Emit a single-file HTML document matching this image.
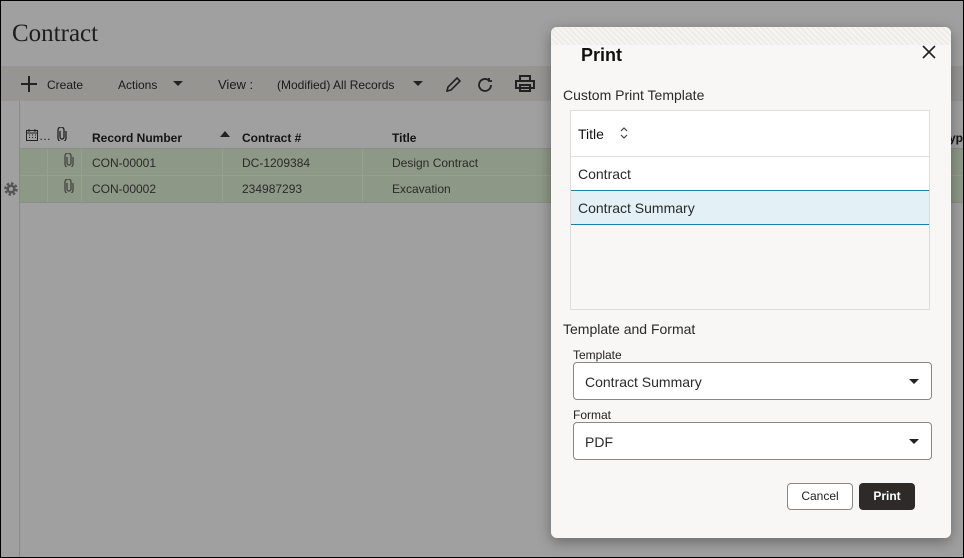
<!DOCTYPE html>
<html><head><style>
*{box-sizing:border-box;margin:0;padding:0}
body{width:964px;height:558px;overflow:hidden;background:#000;font-family:"Liberation Sans",sans-serif;position:relative}
.bg{position:absolute;left:1px;top:1px;width:962px;height:556px;background:#a0a0a0;overflow:hidden}
.abs{position:absolute}
.t{font-size:12px;color:#1a1a1a;white-space:nowrap}
.h{font-weight:bold;font-size:12px;color:#141414;white-space:nowrap}
.dlg{position:absolute;left:551px;top:27px;width:400px;height:511px;background:#f8f7f5;border-radius:6px;box-shadow:0 4px 14px rgba(0,0,0,.35)}
.d{position:absolute;font-size:14px;color:#2a2a2a;white-space:nowrap}
.sel{position:absolute;left:22px;width:359px;height:38px;border:1px solid #8a8885;border-radius:4px;background:#fff}
.caret{position:absolute;right:12px;top:16px;width:0;height:0;border-left:5px solid transparent;border-right:5px solid transparent;border-top:5px solid #222}
</style></head><body>
<div class="bg">
 <div class="abs" style="left:11px;top:19px;font-family:'Liberation Serif',serif;font-size:25px;color:#1e1e1e">Contract</div>
 <div class="abs" style="left:0;top:65px;width:962px;height:35px;background:#979592"></div>
 <div class="abs" style="left:20px;top:82px;width:16px;height:2px;background:#222"></div>
 <div class="abs" style="left:27px;top:75px;width:2px;height:16px;background:#222"></div>
 <div class="abs t" style="left:46px;top:77px">Create</div>
 <div class="abs t" style="left:117px;top:77px">Actions</div>
 <div class="abs" style="left:172px;top:80px;border-left:5px solid transparent;border-right:5px solid transparent;border-top:5px solid #222"></div>
 <div class="abs" style="left:217px;top:76px;font-size:13px;color:#1a1a1a">View :</div>
 <div class="abs t" style="left:276px;top:77px">(Modified) All Records</div>
 <div class="abs" style="left:412px;top:80px;border-left:5px solid transparent;border-right:5px solid transparent;border-top:5px solid #222"></div>
 <svg class="abs" style="left:443px;top:73px" width="20" height="20" viewBox="0 0 20 20" fill="none" stroke="#222" stroke-width="1.6"><path d="M3 17l1-4 9-9 3 3-9 9z"/></svg>
 <svg class="abs" style="left:475px;top:74px" width="20" height="20" viewBox="0 0 20 20" fill="none" stroke="#222" stroke-width="1.8"><path d="M15 10a6 6 0 1 1-2-4.5"/><path d="M13 3v3h3" /></svg>
 <svg class="abs" style="left:513px;top:73px" width="22" height="20" viewBox="0 0 22 20" fill="none" stroke="#222" stroke-width="2"><rect x="6" y="2" width="10" height="5"/><rect x="2" y="7" width="18" height="7"/><rect x="6" y="11" width="10" height="6"/></svg>
 <div class="abs" style="left:18px;top:100px;width:1px;height:460px;background:#8a8a8a"></div>
 <svg class="abs" style="left:24px;top:127px" width="14" height="13" viewBox="0 0 14 13" fill="none" stroke="#222" stroke-width="1"><rect x="1.5" y="2.5" width="11" height="10"/><path d="M1.5 5h11M4 1v3M10 1v3M4 7h1M7 7h1M10 7h1M4 9.5h1M7 9.5h1M10 9.5h1"/></svg>
 <div class="abs t" style="left:38px;top:128px">…</div>
 <svg class="abs" style="left:56px;top:126px" width="10" height="14" viewBox="0 0 10 14" fill="none" stroke="#222" stroke-width="1.3"><path d="M3 4v6a2 2 0 0 0 4 0V3a3 3 0 0 0-6 0v8a4 4 0 0 0 8 0V4"/></svg>
 <div class="abs h" style="left:91px;top:130px">Record Number</div>
 <div class="abs" style="left:219px;top:130px;border-left:5px solid transparent;border-right:5px solid transparent;border-bottom:6px solid #222"></div>
 <div class="abs h" style="left:241px;top:130px">Contract #</div>
 <div class="abs h" style="left:391px;top:130px">Title</div>
 <div class="abs h" style="left:948px;top:130px">yp</div>
 <div class="abs" style="left:19px;top:147px;width:943px;height:1px;background:#8c8c8c"></div>
 <div class="abs" style="left:19px;top:148px;width:943px;height:53px;background:#8e9886"></div>
 <div class="abs" style="left:19px;top:174px;width:943px;height:1px;background:#999f93"></div>
 <div class="abs" style="left:19px;top:201px;width:943px;height:1px;background:#8c8c8c"></div>
 <div class="abs" style="left:46px;top:148px;width:1px;height:53px;background:#999f93"></div>
 <div class="abs" style="left:80px;top:148px;width:1px;height:53px;background:#999f93"></div>
 <div class="abs" style="left:221px;top:148px;width:1px;height:53px;background:#999f93"></div>
 <div class="abs" style="left:361px;top:148px;width:1px;height:53px;background:#999f93"></div>
 <svg class="abs" style="left:63px;top:152px" width="10" height="14" viewBox="0 0 10 14" fill="none" stroke="#444" stroke-width="1.3"><path d="M3 4v6a2 2 0 0 0 4 0V3a3 3 0 0 0-6 0v8a4 4 0 0 0 8 0V4"/></svg>
 <svg class="abs" style="left:63px;top:178px" width="10" height="14" viewBox="0 0 10 14" fill="none" stroke="#444" stroke-width="1.3"><path d="M3 4v6a2 2 0 0 0 4 0V3a3 3 0 0 0-6 0v8a4 4 0 0 0 8 0V4"/></svg>
 <div class="abs t" style="left:91px;top:155px;color:#2a2a2a">CON-00001</div>
 <div class="abs t" style="left:241px;top:155px;color:#2a2a2a">DC-1209384</div>
 <div class="abs t" style="left:391px;top:155px;color:#2a2a2a">Design Contract</div>
 <div class="abs t" style="left:91px;top:181px;color:#2a2a2a">CON-00002</div>
 <div class="abs t" style="left:241px;top:181px;color:#2a2a2a">234987293</div>
 <div class="abs t" style="left:391px;top:181px;color:#2a2a2a">Excavation</div>
 <svg class="abs" style="left:2px;top:180px" width="16" height="16" viewBox="0 0 16 16"><circle cx="8" cy="8" r="5" fill="none" stroke="#555" stroke-width="3.5" stroke-dasharray="2.2 1.7"/><circle cx="8" cy="8" r="4.5" fill="#555"/><circle cx="8" cy="8" r="2" fill="#a0a0a0"/></svg>
</div>
<div class="dlg">
 <div class="abs" style="left:0;top:0;width:400px;height:18px;background:repeating-linear-gradient(45deg,#eeece9 0 2px,#f6f5f2 2px 4px);border-radius:6px 6px 0 0"></div>
 <div class="d" style="left:30px;top:18px;font-size:18px;font-weight:bold;color:#111">Print</div>
 <svg class="abs" style="left:371px;top:18px" width="14" height="14" viewBox="0 0 14 14" stroke="#222" stroke-width="1.6"><path d="M1 1l12 12M13 1L1 13"/></svg>
 <div class="d" style="left:12px;top:60px">Custom Print Template</div>
 <div class="abs" style="left:19px;top:83px;width:360px;height:200px;border:1px solid #dedcd9;background:#f8f7f5">
  <div class="abs" style="left:0;top:0;width:358px;height:46px;background:#fff;border-bottom:1px solid #e0e0e0"></div>
  <div class="d" style="left:7px;top:15px;color:#111">Title</div>
  <svg class="abs" style="left:48px;top:15px" width="10" height="14" viewBox="0 0 10 14" fill="none" stroke="#444" stroke-width="1.2"><path d="M2 5l3-3 3 3M2 9l3 3 3-3"/></svg>
  <div class="abs" style="left:0;top:46px;width:358px;height:34px;background:#fff;border-bottom:1px solid #1b7fa8"></div>
  <div class="d" style="left:7px;top:55px">Contract</div>
  <div class="abs" style="left:0;top:80px;width:358px;height:34px;background:#e3f0f6;border-bottom:1px solid #1b7fa8"></div>
  <div class="d" style="left:7px;top:89px">Contract Summary</div>
 </div>
 <div class="d" style="left:12px;top:294px">Template and Format</div>
 <div class="d" style="left:22px;top:321px;font-size:12px;color:#222">Template</div>
 <div class="sel" style="top:335px"><div class="d" style="left:11px;top:11px">Contract Summary</div><div class="caret"></div></div>
 <div class="d" style="left:22px;top:381px;font-size:12px;color:#222">Format</div>
 <div class="sel" style="top:395px"><div class="d" style="left:11px;top:11px">PDF</div><div class="caret"></div></div>
 <div class="abs" style="left:236px;top:456px;width:66px;height:27px;border:1px solid #8a8885;border-radius:4px;background:#fff;font-size:12px;color:#222;text-align:center;line-height:25px">Cancel</div>
 <div class="abs" style="left:308px;top:456px;width:56px;height:27px;border-radius:4px;background:#2e2a27;font-size:12px;font-weight:bold;color:#fff;text-align:center;line-height:27px">Print</div>
</div>
</body></html>
